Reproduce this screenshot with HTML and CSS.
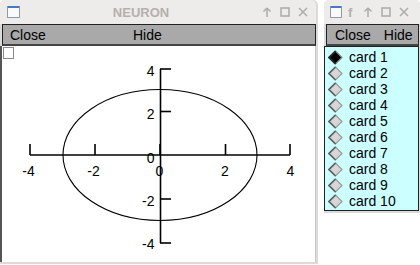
FILE: index.html
```html
<!DOCTYPE html>
<html lang="en">
<head>
    <meta charset="UTF-8">
    <title>NEURON</title>
    <link rel="stylesheet" href="styles.css">
</head>
<body>
    <div class="desktop">
        <div class="window main">
            <div class="titlebar">
                <span class="win-icon"></span>
                <span class="title">NEURON</span>
                <span class="buttons">
                    <svg width="10" height="10" viewBox="0 0 10 10"><path d="M5 1 L1.5 4.5 M5 1 L8.5 4.5 M5 1.5 V10" /></svg>
                    <svg width="10" height="10" viewBox="0 0 10 10"><rect x="1" y="1" width="8" height="8" /></svg>
                    <svg width="10" height="10" viewBox="0 0 10 10"><path d="M1 1 L9 9 M9 1 L1 9" /></svg>
                </span>
            </div>
            <div class="menubar">
                <span class="menu-close">Close</span>
                <span>Hide</span>
            </div>
            <div class="canvas">
                <svg class="plot" width="314" height="215" viewBox="2 46 314 215">
                    <rect x="3.5" y="47.5" width="10" height="11" fill="#fff" stroke="#8a8a8a" />
                    <g stroke="#000" stroke-width="1.6" fill="none">
                        <line x1="30" y1="155" x2="290" y2="155" />
                        <line x1="30" y1="144" x2="30" y2="155" />
                        <line x1="95" y1="144" x2="95" y2="155" />
                        <line x1="160" y1="144" x2="160" y2="155" />
                        <line x1="225.5" y1="144" x2="225.5" y2="155" />
                        <line x1="290" y1="144" x2="290" y2="155" />
                        <line x1="160.5" y1="69" x2="160.5" y2="243" />
                        <line x1="160" y1="69" x2="171" y2="69" />
                        <line x1="160" y1="111.5" x2="171" y2="111.5" />
                        <line x1="160" y1="199" x2="171" y2="199" />
                        <line x1="160" y1="243" x2="171" y2="243" />
                    </g>
                    <ellipse cx="160" cy="155" rx="97" ry="65.5" fill="none" stroke="#000" stroke-width="1.1" />
                    <g class="xlabels">
                        <text x="28.5" y="176">-4</text>
                        <text x="93.5" y="176">-2</text>
                        <text x="159.5" y="176">0</text>
                        <text x="225" y="176">2</text>
                        <text x="290.5" y="176">4</text>
                    </g>
                    <g class="ylabels">
                        <text x="154.5" y="75.5">4</text>
                        <text x="154.5" y="118.5">2</text>
                        <text x="154.5" y="163">0</text>
                        <text x="154.5" y="205.5">-2</text>
                        <text x="154.5" y="249">-4</text>
                    </g>
                </svg>
            </div>
        </div>

        <div class="window side">
            <div class="titlebar">
                <span class="win-icon"></span>
                <span class="title small">f</span>
                <span class="buttons">
                    <svg width="10" height="10" viewBox="0 0 10 10"><path d="M5 1 L1.5 4.5 M5 1 L8.5 4.5 M5 1.5 V10" /></svg>
                    <svg width="10" height="10" viewBox="0 0 10 10"><rect x="1" y="1" width="8" height="8" /></svg>
                    <svg width="10" height="10" viewBox="0 0 10 10"><path d="M1 1 L9 9 M9 1 L1 9" /></svg>
                </span>
            </div>
            <div class="menubar">
                <span>Close</span>
                <span>Hide</span>
            </div>
            <ul class="cards">
                <li class="card selected"><svg class="radio" width="15" height="15" viewBox="0 0 15 15"><path class="face" d="M7.5 1 L14 7.5 L7.5 14 L1 7.5 Z" /><path class="dark" d="M7.5 1 L1 7.5 L7.5 14" /></svg>card 1</li>
                <li class="card"><svg class="radio" width="15" height="15" viewBox="0 0 15 15"><path class="face" d="M7.5 1 L14 7.5 L7.5 14 L1 7.5 Z" /><path class="dark" d="M7.5 1 L1 7.5 L7.5 14" /></svg>card 2</li>
                <li class="card"><svg class="radio" width="15" height="15" viewBox="0 0 15 15"><path class="face" d="M7.5 1 L14 7.5 L7.5 14 L1 7.5 Z" /><path class="dark" d="M7.5 1 L1 7.5 L7.5 14" /></svg>card 3</li>
                <li class="card"><svg class="radio" width="15" height="15" viewBox="0 0 15 15"><path class="face" d="M7.5 1 L14 7.5 L7.5 14 L1 7.5 Z" /><path class="dark" d="M7.5 1 L1 7.5 L7.5 14" /></svg>card 4</li>
                <li class="card"><svg class="radio" width="15" height="15" viewBox="0 0 15 15"><path class="face" d="M7.5 1 L14 7.5 L7.5 14 L1 7.5 Z" /><path class="dark" d="M7.5 1 L1 7.5 L7.5 14" /></svg>card 5</li>
                <li class="card"><svg class="radio" width="15" height="15" viewBox="0 0 15 15"><path class="face" d="M7.5 1 L14 7.5 L7.5 14 L1 7.5 Z" /><path class="dark" d="M7.5 1 L1 7.5 L7.5 14" /></svg>card 6</li>
                <li class="card"><svg class="radio" width="15" height="15" viewBox="0 0 15 15"><path class="face" d="M7.5 1 L14 7.5 L7.5 14 L1 7.5 Z" /><path class="dark" d="M7.5 1 L1 7.5 L7.5 14" /></svg>card 7</li>
                <li class="card"><svg class="radio" width="15" height="15" viewBox="0 0 15 15"><path class="face" d="M7.5 1 L14 7.5 L7.5 14 L1 7.5 Z" /><path class="dark" d="M7.5 1 L1 7.5 L7.5 14" /></svg>card 8</li>
                <li class="card"><svg class="radio" width="15" height="15" viewBox="0 0 15 15"><path class="face" d="M7.5 1 L14 7.5 L7.5 14 L1 7.5 Z" /><path class="dark" d="M7.5 1 L1 7.5 L7.5 14" /></svg>card 9</li>
                <li class="card"><svg class="radio" width="15" height="15" viewBox="0 0 15 15"><path class="face" d="M7.5 1 L14 7.5 L7.5 14 L1 7.5 Z" /><path class="dark" d="M7.5 1 L1 7.5 L7.5 14" /></svg>card 10</li>
            </ul>
        </div>
    </div>
</body>
</html>
```
FILE: styles.css
```css
body {
    margin: 0;
    background-color: #fff;
    font-family: "Liberation Sans", Arial, sans-serif;
    font-size: 14px;
    color: #000;
}

.desktop {
    display: flex;
    gap: 6px;
    align-items: flex-start;
}

.window {
    display: flex;
    flex-direction: column;
    background-color: #dddbd9;
    border-radius: 5px 5px 0 0;
    padding: 0 2px 2px 0;
}

.main {
    width: 316px;
    height: 262px;
}

.side {
    width: 96px;
    padding-right: 0;
}

.titlebar {
    height: 24px;
    flex: none;
    display: flex;
    align-items: center;
    padding: 0 8px 0 7px;
    background-color: #edeceb;
    border-radius: 5px 5px 0 0;
}

.side .titlebar {
    padding-left: 6px;
    padding-right: 11px;
}

.win-icon {
    width: 11px;
    height: 9px;
    flex: none;
    background-color: #fafafa;
    border: 1px solid #8e9aa8;
    border-top: 2px solid #4a78c0;
    border-radius: 1px;
}

.side .win-icon {
    width: 10px;
}

.title {
    flex: 1;
    text-align: center;
    font-weight: bold;
    font-size: 13px;
    color: #b4b0ac;
}

.title.small {
    text-align: left;
    padding-left: 6px;
}

.buttons {
    display: flex;
    gap: 8px;
}

.buttons svg {
    fill: none;
    stroke: #b0aeac;
    stroke-width: 1.6;
}

.menubar {
    height: 19px;
    flex: none;
    display: flex;
    align-items: center;
    gap: 24px;
    padding: 0 0 0 7px;
    margin-left: 2px;
    background-color: #a9a9a9;
    border: 1px solid #222;
    border-bottom: 2px solid #444;
}

.menubar .menu-close {
    width: 99px;
}

.side .menubar {
    gap: 13px;
    padding-left: 8px;
    margin-right: 1px;
}

.canvas {
    flex: 1;
    background-color: #fff;
    border-left: 2px solid #555;
    border-right: 1px solid #c8c8c8;
}

.plot {
    display: block;
}

.plot text {
    font-family: "Liberation Sans", Arial, sans-serif;
    font-size: 14px;
    fill: #000;
}

.xlabels text {
    text-anchor: middle;
}

.ylabels text {
    text-anchor: end;
}

.cards {
    list-style: none;
    margin: 0 1px 0 0;
    padding: 2px 0 1px 3px;
    background-color: #ccffff;
    border: 1px solid #222;
}

.card {
    height: 16px;
    display: flex;
    align-items: center;
    gap: 6px;
}

.radio {
    flex: none;
}

.radio .face {
    fill: #d6d6d6;
    stroke: #9a9a9a;
    stroke-width: 1.2;
}

.radio .dark {
    fill: none;
    stroke: #5e5e5e;
    stroke-width: 1.6;
}

.card.selected .radio .face {
    fill: #000;
    stroke: #888;
}

.card.selected .radio .dark {
    stroke: #222;
}
```
